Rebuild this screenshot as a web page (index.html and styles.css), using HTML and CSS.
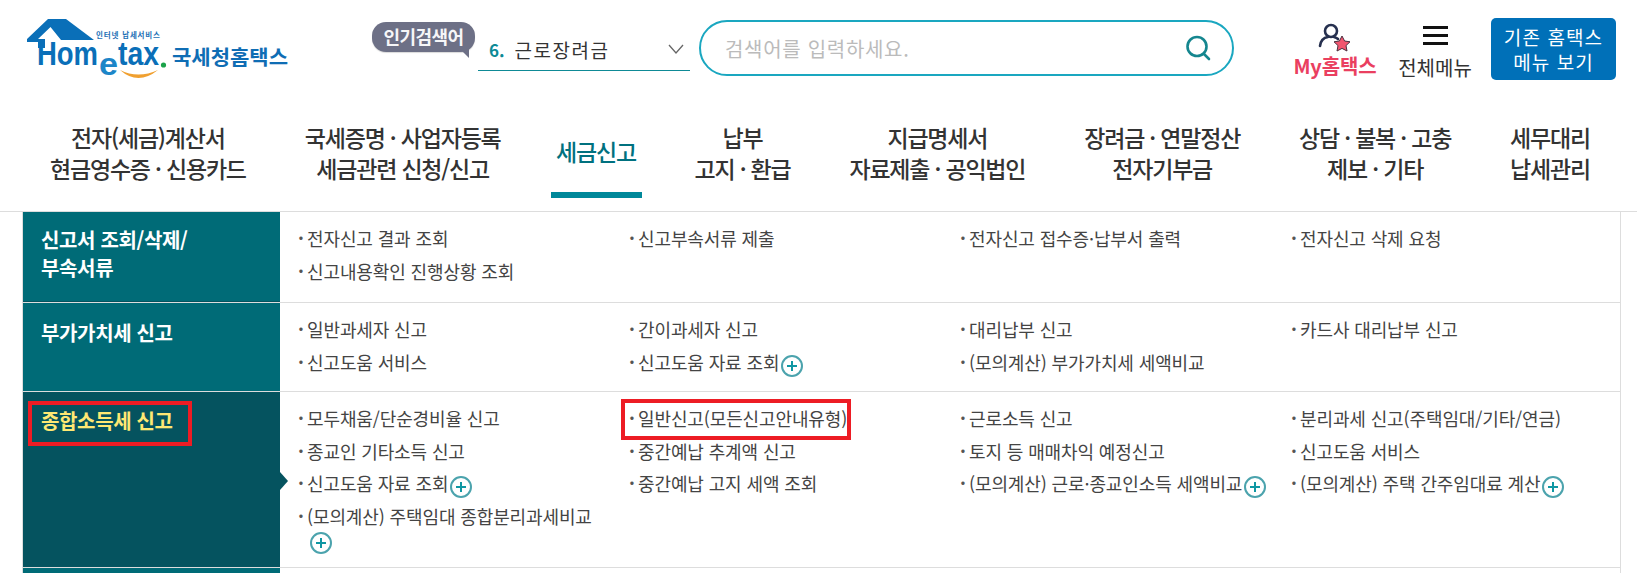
FILE: index.html
```html
<!DOCTYPE html>
<html lang="ko">
<head>
<meta charset="utf-8">
<title>국세청 홈택스</title>
<link rel="stylesheet" href="styles.css">
</head>
<body>
<header class="top">
  <a class="logo">
    <svg class="logo-svg" width="264" height="70" viewBox="0 0 264 70">
      <path d="M1 21 L22 1 L40 1 L68 22 L35 22 L24.5 9 L12 21 L19 21 L19 30 L12 30 L12 24 L1 24 Z" fill="#0a6fb8"/>
      <text x="11" y="47" class="logo-home" textLength="61" lengthAdjust="spacingAndGlyphs">Hom</text>
      <text x="73" y="57" class="logo-e" textLength="19" lengthAdjust="spacingAndGlyphs">e</text>
      <text x="92" y="47" class="logo-tax" textLength="41" lengthAdjust="spacingAndGlyphs">tax</text>
      <circle cx="137.5" cy="47" r="2.6" fill="#1ba24a"/>
      <path d="M94 52 Q112 68 132 52 Q112 61 94 52 Z" fill="#f0a030"/>
      <text x="70" y="20" class="logo-sub" textLength="64">인터넷 납세서비스</text>
      <text x="146" y="47" class="logo-name" textLength="116" lengthAdjust="spacingAndGlyphs">국세청홈택스</text>
    </svg>
  </a>
  <div class="popular">
    <div class="bubble">인기검색어</div>
    <div class="select">
      <b class="rank">6.</b><span class="kw">근로장려금</span>
      <svg class="chev" width="16" height="10" viewBox="0 0 16 10"><path d="M1 1 L8 9 L15 1" fill="none" stroke="#666" stroke-width="1.3"/></svg>
    </div>
  </div>
  <div class="search">
    <span class="placeholder">검색어를 입력하세요.</span>
    <svg width="28" height="28" viewBox="0 0 28 28"><circle cx="13" cy="12.5" r="9.5" fill="none" stroke="#15868f" stroke-width="2.6"/><path d="M20 20 L25 25" stroke="#15868f" stroke-width="2.6" stroke-linecap="round"/></svg>
  </div>
  <a class="util my">
    <svg width="34" height="29" viewBox="0 0 34 29">
      <circle cx="13" cy="8" r="6" fill="none" stroke="#26304f" stroke-width="2.6"/>
      <path d="M2 23 Q3 15 10 14 M16 14 Q19 15 20 16" fill="none" stroke="#26304f" stroke-width="2.6" stroke-linecap="round"/>
      <path d="M24 13 L26.6 18 L32 18.8 L28 22.6 L29 28 L24 25.4 L19 28 L20 22.6 L16 18.8 L21.4 18 Z" fill="#f2566f" stroke="#4a3040" stroke-width="1"/>
    </svg>
    <span>My홈택스</span>
  </a>
  <a class="util all">
    <span class="burger"><i></i><i></i><i></i></span>
    <span>전체메뉴</span>
  </a>
  <a class="old">기존 홈택스<br>메뉴 보기</a>
</header>

<nav class="gnb">
  <a>전자(세금)계산서<br>현금영수증 · 신용카드</a>
  <a>국세증명 · 사업자등록<br>세금관련 신청/신고</a>
  <a class="on">세금신고</a>
  <a>납부<br>고지 · 환급</a>
  <a>지급명세서<br>자료제출 · 공익법인</a>
  <a>장려금 · 연말정산<br>전자기부금</a>
  <a>상담 · 불복 · 고충<br>제보 · 기타</a>
  <a>세무대리<br>납세관리</a>
</nav>

<main class="menu">
  <section class="row r1">
    <h3>신고서 조회/삭제/<br>부속서류</h3>
    <ul>
      <li>전자신고 결과 조회</li>
      <li>신고부속서류 제출</li>
      <li>전자신고 접수증·납부서 출력</li>
      <li>전자신고 삭제 요청</li>
      <li>신고내용확인 진행상황 조회</li>
    </ul>
  </section>
  <section class="row r2">
    <h3>부가가치세 신고</h3>
    <ul>
      <li>일반과세자 신고</li>
      <li>간이과세자 신고</li>
      <li>대리납부 신고</li>
      <li>카드사 대리납부 신고</li>
      <li>신고도움 서비스</li>
      <li>신고도움 자료 조회<i class="plus"></i></li>
      <li>(모의계산) 부가가치세 세액비교</li>
    </ul>
  </section>
  <section class="row r3">
    <h3><span class="mark">종합소득세 신고</span></h3>
    <ul>
      <li>모두채움/단순경비율 신고</li>
      <li><span class="mark2">일반신고(모든신고안내유형)</span></li>
      <li>근로소득 신고</li>
      <li>분리과세 신고(주택임대/기타/연금)</li>
      <li>종교인 기타소득 신고</li>
      <li>중간예납 추계액 신고</li>
      <li>토지 등 매매차익 예정신고</li>
      <li>신고도움 서비스</li>
      <li>신고도움 자료 조회<i class="plus"></i></li>
      <li>중간예납 고지 세액 조회</li>
      <li>(모의계산) 근로·종교인소득 세액비교<i class="plus"></i></li>
      <li>(모의계산) 주택 간주임대료 계산<i class="plus"></i></li>
      <li class="tall">(모의계산) 주택임대 종합분리과세비교<br><i class="plus solo"></i></li>
    </ul>
  </section>
  <section class="row r4">
    <h3></h3>
    <ul></ul>
  </section>
</main>
</body>
</html>
```

FILE: styles.css
```css
* { box-sizing: border-box; }
html, body { margin: 0; padding: 0; height: 573px; overflow: hidden; background: #fff; }
body { font-family: "Noto Sans CJK KR", "Noto Sans", sans-serif; color: #333; }
ul { list-style: none; margin: 0; padding: 0; }
h3 { margin: 0; }

.top { display: flex; align-items: flex-start; height: 105px; padding: 18px 22px 0 26px; }
.logo { width: 264px; margin-right: 82px; display: block; flex: none; }
.logo-svg { display: block; }
.logo-home, .logo-tax { font: bold 34px "Liberation Sans", sans-serif; fill: #0a6fb8; }
.logo-e { font: bold 32px "Liberation Sans", sans-serif; fill: #1c86c8; }
.logo-sub { font: bold 7.5px "Noto Sans CJK KR", sans-serif; fill: #1b6fb5; }
.logo-name { font: bold 20px "Noto Sans CJK KR", sans-serif; fill: #0f6db4; }

.popular { display: flex; width: 318px; flex: none; }
.bubble { position: relative; width: 103px; height: 30px; margin-top: 4px; background: #6d7086; color: #f6f6f8; border-radius: 14px; font-size: 18px; font-weight: 700; line-height: 28px; text-align: center; letter-spacing: -0.6px; flex: none; box-shadow: 0 1px 1px rgba(0,0,0,.15); }
.bubble::after { content: ""; position: absolute; right: 6px; top: 26px; border-left: 10px solid transparent; border-top: 10px solid #6d7086; }
.select { display: flex; align-items: center; width: 212px; height: 53px; margin-left: 3px; border-bottom: 1px solid #0e8a96; padding: 10px 6px 0 11px; }
.rank { color: #0e8a96; font-size: 17px; margin-right: 10px; }
.kw { font-size: 19px; color: #333; flex: 1; letter-spacing: 1.5px; }
.chev { flex: none; }

.search { display: flex; align-items: center; justify-content: space-between; width: 535px; height: 56px; margin: 2px 0 0 9px; flex: none; border: 2px solid #1aa7c0; border-radius: 28px; padding: 0 20px 0 24px; }
.placeholder { font-size: 20px; color: #bbb; letter-spacing: 0.7px; }

.util { display: flex; flex-direction: column; align-items: center; flex: none; font-size: 20px; line-height: 24px; white-space: nowrap; }
.my { margin: 5px 0 0 59px; width: 84px; color: #ea3f60; font-weight: 700; gap: 2px; letter-spacing: -0.1px; }
.all { margin: 8px 0 0 21px; width: 74px; color: #333; letter-spacing: 0; }
.burger { display: flex; flex-direction: column; gap: 5px; width: 25px; margin-bottom: 11px; }
.burger i { display: block; height: 3px; background: #111; }
.old { display: block; flex: none; width: 125px; height: 62px; margin: 0 0 0 19px; background: #0070b8; color: #fff; border-radius: 5px; font-size: 19px; line-height: 25px; padding-top: 6px; text-align: center; letter-spacing: 1.1px; }

.gnb { display: flex; justify-content: space-between; align-items: flex-start; height: 107px; padding: 17px 47px 0 50px; border-bottom: 1px solid #ddd; font-size: 23px; font-weight: 500; line-height: 31px; letter-spacing: -1.2px; color: #333; text-align: center; }
.gnb a { display: block; white-space: nowrap; }
.gnb .on { width: 91px; height: 76px; margin: 0 -6px 0 -9px; padding-top: 14px; color: #00717f; border-bottom: 6px solid #00889a; }

.menu { margin: 0 16px 0 22px; border-left: 1px solid #ddd; border-right: 1px solid #ddd; }
.row { display: grid; grid-template-columns: 257px 1fr; border-bottom: 1px solid #ddd; }
.row h3 { color: #fff; font-size: 20px; font-weight: 700; line-height: 28px; letter-spacing: -0.35px; padding: 14px 18px; }
.row ul { display: grid; grid-template-columns: repeat(4, 331px); grid-auto-rows: 32.7px; align-content: start; padding: 10px 0 0 18px; }
.row li { position: relative; padding-left: 9px; font-size: 18px; line-height: 32px; color: #444; letter-spacing: -0.12px; white-space: nowrap; font-weight: 400; }
.row li::before { content: "·"; position: absolute; left: 0; top: -1px; color: #555; font-weight: 700; }
.r1 { height: 91px; }
.r1 h3 { background: #006b77; box-shadow: inset 0 -1px 0 #05535f; }
.r2 { height: 89px; }
.r2 h3 { background: #006b77; padding-top: 16px; }
.r3 { height: 176px; position: relative; }
.r3 h3 { background: #05535f; color: #ffe873; position: relative; padding-top: 15px; }
.r3 h3::after { content: ""; position: absolute; right: -8px; top: 80px; border-left: 8px solid #05535f; border-top: 9px solid transparent; border-bottom: 9px solid transparent; }
.r4 { height: 7px; border-bottom: 0; }
.r4 h3 { background: #006b77; padding: 0; }
.r4 ul { padding: 0; }

.mark { display: inline-block; position: relative; }
.mark::after { content: ""; position: absolute; left: -13px; top: -6px; width: 156px; height: 37px; border: 4px solid #ed1c24; }
.mark2 { position: relative; display: inline-block; }
.mark2::after { content: ""; position: absolute; left: -17px; top: -3px; width: 222px; height: 33px; border: 4px solid #ed1c24; }

.plus { display: inline-block; position: relative; width: 22px; height: 22px; margin-left: 2px; vertical-align: -7px; border: 2px solid #4ba3ad; border-radius: 50%; background: #fff; }
.plus::before, .plus::after { content: ""; position: absolute; background: #0f97a3; }
.plus::before { left: 4px; top: 8px; width: 10px; height: 2px; }
.plus::after { left: 8px; top: 4px; width: 2px; height: 10px; }
.plus.solo { margin-left: 3px; vertical-align: 5px; }
.tall { line-height: 32px; }
```
